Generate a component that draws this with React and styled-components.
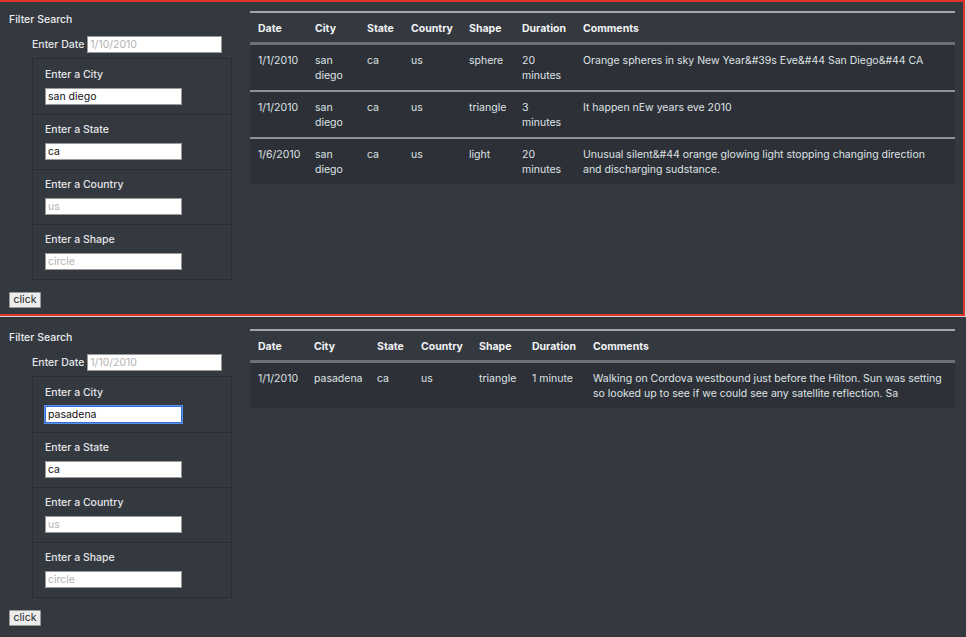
import React from 'react';
import styled, { createGlobalStyle, css } from 'styled-components';

const GlobalStyle = createGlobalStyle`
  html, body { margin: 0; padding: 0; background: #343940; }
  body { font-family: Inter, "Liberation Sans", Arial, sans-serif; }
  * { box-sizing: border-box; }
`;

const Page = styled.div`
  width: 966px;
  height: 637px;
  overflow: hidden;
  display: flex;
  flex-direction: column;
  gap: 1px;
  background: #cfd2d5;
`;

const Panel = styled.section`
  flex: none;
  height: ${(p) => p.$height}px;
  width: ${(p) => (p.$highlight ? 965 : 966)}px;
  background: #343940;
  padding: ${(p) => p.$padTop}px 9px 0 9px;
  display: grid;
  grid-template-columns: 232px 705px;
  column-gap: 9px;
  align-items: start;
  ${(p) =>
    p.$highlight &&
    css`
      border-top: 2px solid #e0352b;
      border-right: 2px solid #e0352b;
      border-bottom: 2px solid #e0352b;
    `}
`;

const Sidebar = styled.div`
  padding-top: 2px;
  display: flex;
  flex-direction: column;
  align-items: flex-start;
`;

const Title = styled.div`
  font-size: 10.5px;
  line-height: 14px;
  font-weight: 500;
  color: #eceef0;
  margin-bottom: 9px;
`;

const DateRow = styled.div`
  display: flex;
  align-items: center;
  gap: 3px;
  margin-left: 23px;
`;

const Label = styled.label`
  font-size: 10.5px;
  line-height: 14px;
  font-weight: 500;
  color: #e4e6e9;
  display: block;
  white-space: nowrap;
`;

const TextInput = styled.input`
  display: block;
  width: ${(p) => p.$w}px;
  height: 17px;
  margin: 0;
  padding: 0 2px;
  font-family: Inter, "Liberation Sans", Arial, sans-serif;
  font-size: 10.5px;
  color: #111;
  background: #fff;
  border: 1px solid ${(p) => (p.$focus ? '#2f6fd6' : '#9a9a9a')};
  border-radius: 0;
  outline: ${(p) => (p.$focus ? '1px solid #5b92e8' : 'none')};
  &::placeholder { color: #b3b3b3; }
`;

const ListGroup = styled.div`
  margin-top: 5px;
  margin-left: 23px;
  width: 200px;
  border: 1px solid #2a2e33;
`;

const ListItem = styled.div`
  height: 55px;
  padding: 8px 12px 0;
  border-top: 1px solid #2a2e33;
  &:first-child { border-top: none; padding-top: 9px; }
  ${Label} { margin-bottom: 6px; }
`;

const ClickButton = styled.button`
  margin-top: 12px;
  width: 32px;
  height: 16px;
  padding: 0;
  font-family: Inter, "Liberation Sans", Arial, sans-serif;
  font-size: 10.5px;
  line-height: 12px;
  color: #222;
  background: #ececec;
  border: 1px solid #9b9b9b;
  border-radius: 1px;
`;

const Table = styled.table`
  width: 705px;
  border-collapse: collapse;
  table-layout: fixed;
  font-size: 10.5px;
  color: #dfe2e5;
`;

const Th = styled.th`
  text-align: left;
  font-weight: 700;
  color: #f1f2f4;
  padding: 8px 4px 6px 8px;
  line-height: 15px;
  white-space: nowrap;
  border-top: 2px solid #a4a7aa;
  border-bottom: 3px solid #6b7075;
`;

const Td = styled.td`
  padding: 8px 8px 7px 8px;
  line-height: 15px;
  vertical-align: top;
  background: #2d3137;
  border-top: 2px solid #8f9295;
  white-space: ${(p) => (p.$single ? 'nowrap' : 'normal')};
  tr:first-child > & { border-top: none; }
`;

const Line = styled.span`
  display: block;
  white-space: nowrap;
`;

const fields = [
  { label: 'Enter a City', key: 'city' },
  { label: 'Enter a State', key: 'state' },
  { label: 'Enter a Country', key: 'country' },
  { label: 'Enter a Shape', key: 'shape' },
];

const headers = ['Date', 'City', 'State', 'Country', 'Shape', 'Duration', 'Comments'];

const panels = [
  {
    highlight: true,
    height: 316,
    padTop: 9,
    cols: [57, 52, 44, 58, 53, 61],
    inputs: {
      city: { value: 'san diego' },
      state: { value: 'ca' },
      country: { placeholder: 'us' },
      shape: { placeholder: 'circle' },
    },
    rows: [
      ['1/1/2010', 'san diego', 'ca', 'us', 'sphere', '20 minutes', ['Orange spheres in sky New Year&#39s Eve&#44 San Diego&#44 CA']],
      ['1/1/2010', 'san diego', 'ca', 'us', 'triangle', '3 minutes', ['It happen nEw years eve 2010']],
      ['1/6/2010', 'san diego', 'ca', 'us', 'light', '20 minutes', ['Unusual silent&#44 orange glowing light stopping changing direction', 'and discharging sudstance.']],
    ],
  },
  {
    highlight: false,
    height: 320,
    padTop: 12,
    cols: [56, 63, 44, 58, 53, 61],
    inputs: {
      city: { value: 'pasadena', focus: true },
      state: { value: 'ca' },
      country: { placeholder: 'us' },
      shape: { placeholder: 'circle' },
    },
    rows: [
      ['1/1/2010', 'pasadena', 'ca', 'us', 'triangle', '1 minute', ['Walking on Cordova westbound just before the Hilton. Sun was setting', 'so looked up to see if we could see any satellite reflection. Sa']],
    ],
  },
];

function SearchPanel({ data }) {
  return (
    <Panel $highlight={data.highlight} $height={data.height} $padTop={data.padTop}>
      <Sidebar>
        <Title>Filter Search</Title>
        <DateRow>
          <Label>Enter Date</Label>
          <TextInput $w={135} placeholder="1/10/2010" readOnly />
        </DateRow>
        <ListGroup>
          {fields.map((f) => {
            const inp = data.inputs[f.key];
            return (
              <ListItem key={f.key}>
                <Label>{f.label}</Label>
                <TextInput
                  $w={137}
                  $focus={inp.focus}
                  defaultValue={inp.value}
                  placeholder={inp.placeholder}
                  spellCheck={false}
                />
              </ListItem>
            );
          })}
        </ListGroup>
        <ClickButton>click</ClickButton>
      </Sidebar>
      <Table>
        <colgroup>
          {data.cols.map((w, i) => (
            <col key={i} style={{ width: w }} />
          ))}
          <col />
        </colgroup>
        <thead>
          <tr>
            {headers.map((h) => (
              <Th key={h}>{h}</Th>
            ))}
          </tr>
        </thead>
        <tbody>
          {data.rows.map((r, i) => (
            <tr key={i}>
              {r.map((c, j) =>
                Array.isArray(c) ? (
                  <Td key={j}>
                    {c.map((line, k) => (
                      <Line key={k}>{line}</Line>
                    ))}
                  </Td>
                ) : (
                  <Td key={j} $single={c === 'triangle' || c === '1 minute' || c === 'pasadena'}>
                    {c}
                  </Td>
                )
              )}
            </tr>
          ))}
        </tbody>
      </Table>
    </Panel>
  );
}

export default function App() {
  return (
    <>
      <GlobalStyle />
      <Page>
        {panels.map((p, i) => (
          <SearchPanel key={i} data={p} />
        ))}
      </Page>
    </>
  );
}
